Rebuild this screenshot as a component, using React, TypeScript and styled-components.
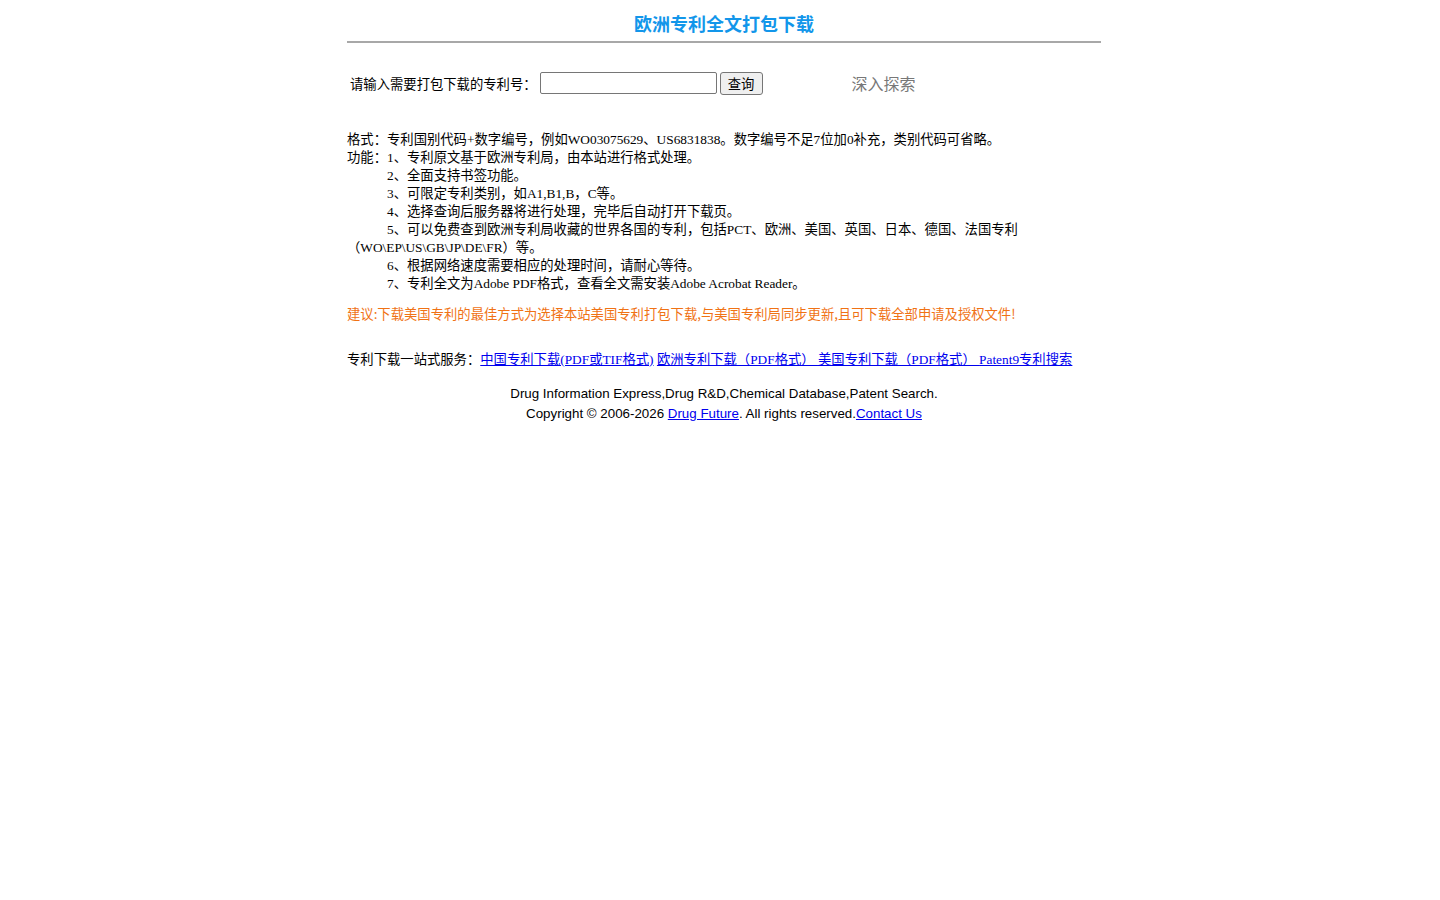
import React from 'react';
import styled, { createGlobalStyle } from 'styled-components';

const GlobalStyle = createGlobalStyle`
  body {
    margin: 0;
    background: #fff;
    color: #000;
    font-family: "Liberation Serif", "Noto Sans CJK SC", serif;
  }
`;

const Page = styled.div`
  width: 754px;
  margin-left: calc(50% - 373px);
`;

const Title = styled.h1`
  margin: 0;
  padding-top: 10px;
  line-height: 26px;
  font-size: 18px;
  font-weight: bold;
  text-align: center;
  color: #1296ea;
  font-family: "Noto Sans CJK SC", sans-serif;
`;

const Rule = styled.hr`
  margin: 5px 0 0;
  height: 0;
  border: none;
  border-top: 2px solid #a8a8a8;
`;

const SearchRow = styled.form`
  display: flex;
  align-items: center;
  padding: 28px 0 0 3px;
  height: 24px;
  font-family: "Noto Sans CJK SC", sans-serif;
`;

const Label = styled.span`
  font-size: 13.33px;
  margin-right: 3px;
`;

const Input = styled.input`
  box-sizing: border-box;
  width: 177px;
  height: 22px;
  border: 1px solid #767676;
  border-radius: 2px;
  padding: 0 4px;
  margin: 0;
`;

const Button = styled.button`
  box-sizing: border-box;
  width: 43px;
  height: 23px;
  margin: 0 0 0 3px;
  padding: 0;
  background: #efefef;
  border: 1px solid #767676;
  border-radius: 3px;
  font-size: 13.33px;
  font-family: "Noto Sans CJK SC", sans-serif;
  color: #000;
`;

const Explore = styled.a`
  margin-left: 89px;
  font-size: 16px;
  color: #777;
  text-decoration: none;
`;

const Notes = styled.div`
  margin-top: 36px;
  font-size: 13.33px;
  line-height: 18px;
`;

const Line = styled.div<{ $indent?: boolean }>`
  text-indent: ${(p) => (p.$indent ? '40px' : '0')};
`;

const Advice = styled.p`
  margin: 12px 0 0;
  font-size: 13.33px;
  line-height: 18px;
  color: #f07214;
  font-family: "Noto Sans CJK SC", sans-serif;
`;

const Services = styled.div`
  margin-top: 27px;
  font-size: 13.33px;
  line-height: 18px;
`;

const ServiceLabel = styled.span`
  font-family: "Noto Sans CJK SC", sans-serif;
`;

const Link = styled.a`
  color: #0000ee;
  text-decoration: underline;
`;

const Footer = styled.div`
  margin-top: 15px;
  text-align: center;
  font-family: "Liberation Sans", Arial, sans-serif;
  font-size: 13.33px;
  line-height: 20px;
`;

export default function App() {
  return (
    <Page>
      <GlobalStyle />
      <Title>欧洲专利全文打包下载</Title>
      <Rule />
      <SearchRow onSubmit={(e) => e.preventDefault()}>
        <Label>请输入需要打包下载的专利号：</Label>
        <Input type="text" />
        <Button type="submit">查询</Button>
        <Explore href="#">深入探索</Explore>
      </SearchRow>
      <Notes>
        <Line>格式：专利国别代码+数字编号，例如WO03075629、US6831838。数字编号不足7位加0补充，类别代码可省略。</Line>
        <Line>功能：1、专利原文基于欧洲专利局，由本站进行格式处理。</Line>
        <Line $indent>2、全面支持书签功能。</Line>
        <Line $indent>3、可限定专利类别，如A1,B1,B，C等。</Line>
        <Line $indent>4、选择查询后服务器将进行处理，完毕后自动打开下载页。</Line>
        <Line $indent>
          5、可以免费查到欧洲专利局收藏的世界各国的专利，包括PCT、欧洲、美国、英国、日本、德国、法国专利
          <br />
          （WO\EP\US\GB\JP\DE\FR）等。
        </Line>
        <Line $indent>6、根据网络速度需要相应的处理时间，请耐心等待。</Line>
        <Line $indent>7、专利全文为Adobe PDF格式，查看全文需安装Adobe Acrobat Reader。</Line>
      </Notes>
      <Advice>建议:下载美国专利的最佳方式为选择本站美国专利打包下载,与美国专利局同步更新,且可下载全部申请及授权文件!</Advice>
      <Services>
        <ServiceLabel>专利下载一站式服务：</ServiceLabel>
        <Link href="#">中国专利下载(PDF或TIF格式)</Link>{' '}
        <Link href="#">欧洲专利下载（PDF格式） </Link>{' '}
        <Link href="#">美国专利下载（PDF格式） </Link>{' '}
        <Link href="#">Patent9专利搜索</Link>
      </Services>
      <Footer>
        <div>Drug Information Express,Drug R&amp;D,Chemical Database,Patent Search.</div>
        <div>
          Copyright © 2006-2026 <Link href="#">Drug Future</Link>. All rights reserved.<Link href="#">Contact Us</Link>
        </div>
      </Footer>
    </Page>
  );
}
